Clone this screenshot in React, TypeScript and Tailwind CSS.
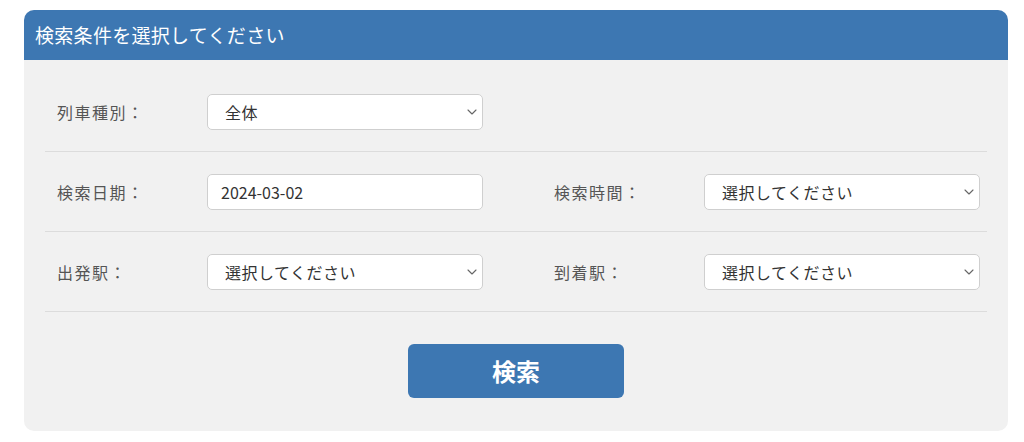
import React from "react";

const font = { fontFamily: '"Noto Sans CJK JP", "Noto Sans", sans-serif' };

function Chevron() {
  return (
    <svg width="10" height="6" viewBox="0 0 10 6" fill="none" className="shrink-0">
      <path d="M1 1 L5 5 L9 1" stroke="#666" strokeWidth="1.1" strokeLinecap="round" strokeLinejoin="round" />
    </svg>
  );
}

function SelectBox({ text }: { text: string }) {
  return (
    <div className="w-[276px] h-[36px] bg-white border border-[#cfcfcf] rounded-[5px] flex items-center justify-between pl-[17px] pr-[5px] text-[16px] tracking-[0.5px] text-[#333]">
      <span>{text}</span>
      <Chevron />
    </div>
  );
}

function InputBox({ text }: { text: string }) {
  return (
    <div className="w-[276px] h-[36px] bg-white border border-[#cfcfcf] rounded-[5px] flex items-center pl-[13px] text-[16px] text-[#333]">
      <span>{text}</span>
    </div>
  );
}

function Label({ text }: { text: string }) {
  return <div className="w-[150px] text-[16px] tracking-[1.5px] text-[#555]">{text}</div>;
}

export default function App() {
  return (
    <div className="w-[1024px] h-[442px] bg-white pt-[10px] pl-[24px]" style={font}>
      <div className="w-[984px] h-[421px] rounded-[10px] bg-[#f1f1f1] overflow-hidden flex flex-col">
        <div className="h-[50px] bg-[#3d77b2] flex items-center pl-[11px] text-white text-[19px] tracking-[0.3px]">
          検索条件を選択してください
        </div>
        <div className="px-[21px] pt-[12px] flex flex-col">
          <div className="flex items-center pl-[12px] pt-[22px] pb-[21px] border-b border-[#dcdcdc]">
            <Label text="列車種別：" />
            <SelectBox text="全体" />
          </div>
          <div className="flex items-center pl-[12px] pt-[22px] pb-[21px] border-b border-[#dcdcdc]">
            <Label text="検索日期：" />
            <InputBox text="2024-03-02" />
            <div className="w-[71px]" />
            <Label text="検索時間：" />
            <SelectBox text="選択してください" />
          </div>
          <div className="flex items-center pl-[12px] pt-[22px] pb-[21px] border-b border-[#dcdcdc]">
            <Label text="出発駅：" />
            <SelectBox text="選択してください" />
            <div className="w-[71px]" />
            <Label text="到着駅：" />
            <SelectBox text="選択してください" />
          </div>
          <div className="flex justify-center pt-[32px]">
            <button className="w-[216px] h-[54px] rounded-[6px] bg-[#3d77b2] text-white text-[24px] font-bold flex items-center justify-center" style={font}>
              検索
            </button>
          </div>
        </div>
      </div>
    </div>
  );
}
